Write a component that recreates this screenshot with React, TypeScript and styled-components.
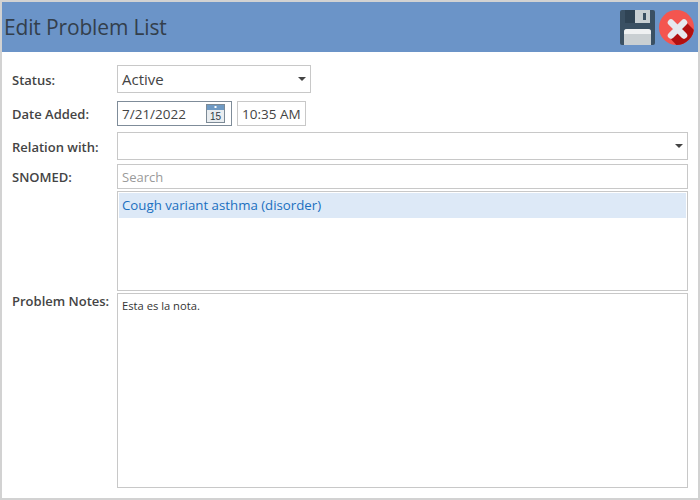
import React from "react";
import styled, { createGlobalStyle } from "styled-components";

const Global = createGlobalStyle`
  html, body {
    margin: 0;
    padding: 0;
    background: #ffffff;
  }
`;

const Dialog = styled.div`
  width: 700px;
  height: 500px;
  box-sizing: border-box;
  border: 2px solid #d2d2d2;
  background: #ffffff;
  font-family: "Open Sans", "Noto Sans", "Liberation Sans", sans-serif;
  color: #444444;
  display: flex;
  flex-direction: column;
`;

const Header = styled.div`
  height: 50px;
  flex: none;
  background: #6b94c8;
  display: flex;
  align-items: center;
  justify-content: space-between;
  padding: 0 4px 0 2px;
`;

const Title = styled.h1`
  margin: 0;
  font-size: 21px;
  font-weight: 400;
  color: #333f4c;
  letter-spacing: -0.15px;
`;

const Actions = styled.div`
  display: flex;
  align-items: center;
  gap: 4px;
`;

const Form = styled.div`
  flex: 1;
  display: grid;
  grid-template-columns: 105px 1fr;
  align-content: start;
  padding: 13px 10px 0 10px;
`;

const Label = styled.div<{ $top: number }>`
  font-size: 13px;
  font-weight: 600;
  line-height: 16px;
  color: #444444;
  padding-top: ${(p) => p.$top}px;
  white-space: nowrap;
`;

const Cell = styled.div<{ $h: number; $mb: number }>`
  height: ${(p) => p.$h}px;
  margin-bottom: ${(p) => p.$mb}px;
  display: flex;
  gap: 5px;
`;

const Field = styled.div<{ $width?: number; $size?: number }>`
  box-sizing: border-box;
  height: 100%;
  width: ${(p) => (p.$width ? `${p.$width}px` : "100%")};
  border: 1px solid #c8c8c8;
  background: #ffffff;
  display: flex;
  align-items: center;
  justify-content: space-between;
  padding: 0 4px;
  font-size: ${(p) => p.$size ?? 13.5}px;
  white-space: nowrap;
  color: #444444;
`;

const DateField = styled(Field)`
  border-color: #7f8c99;
  padding-right: 6px;
`;

const Caret = styled.span`
  width: 0;
  height: 0;
  border-left: 4px solid transparent;
  border-right: 4px solid transparent;
  border-top: 4px solid #444444;
`;

const Placeholder = styled.span`
  color: #9a9a9a;
  font-size: 13px;
`;

const ListBox = styled.div`
  box-sizing: border-box;
  width: 100%;
  height: 100%;
  border: 1px solid #c8c8c8;
  padding: 1px;
`;

const ListItem = styled.div`
  height: 25px;
  background: #dde9f7;
  color: #1a6fc0;
  font-size: 13.25px;
  line-height: 25px;
  padding-left: 3px;
`;

const Notes = styled.div`
  box-sizing: border-box;
  width: 100%;
  height: 100%;
  border: 1px solid #c8c8c8;
  font-size: 11.2px;
  color: #333333;
  padding: 4px;
`;

const SaveIcon = () => (
  <svg width="35" height="35" viewBox="0 0 35 35">
    <rect width="35" height="35" rx="2" fill="#3a5063" />
    <rect x="5" y="0" width="10" height="13" fill="#2f4354" />
    <rect x="15" y="0" width="15" height="13" fill="#c9d0d4" />
    <rect x="23" y="3" width="3" height="7" fill="#3a5063" />
    <path d="M4 35V22a3 3 0 0 1 3-3h21a3 3 0 0 1 3 3v13z" fill="#c9cfd2" />
    <path d="M4 24v-2a3 3 0 0 1 3-3h21a3 3 0 0 1 3 3v2z" fill="#eff1f2" />
  </svg>
);

const CloseIcon = () => (
  <svg width="35" height="35" viewBox="0 0 35 35">
    <defs>
      <clipPath id="close-disc">
        <circle cx="17.5" cy="17.5" r="17.5" />
      </clipPath>
    </defs>
    <circle cx="17.5" cy="17.5" r="17.5" fill="#f4554f" />
    <path d="M27 12 L48 33 L31 50 L10 27z" fill="#b21010" clipPath="url(#close-disc)" />
    <path d="M12 12.5L25 25.5M25 12.5L12 25.5" stroke="#e6e9ee" strokeWidth="6.5" strokeLinecap="round" />
  </svg>
);

const CalendarIcon = () => (
  <svg width="19" height="19" viewBox="0 0 19 19">
    <rect x="0.5" y="0.5" width="18" height="18" fill="#e9edf0" stroke="#7c8a96" />
    <rect x="1" y="1" width="17" height="5" fill="#6f9ac4" />
    <rect x="8.5" y="2" width="2" height="2" fill="#ffffff" />
    <text x="9.5" y="16" textAnchor="middle" fontSize="10" fontWeight="400" fill="#2f3b46" fontFamily="Liberation Sans, sans-serif">
      15
    </text>
  </svg>
);

export default function App() {
  return (
    <Dialog>
      <Global />
      <Header>
        <Title>Edit Problem List</Title>
        <Actions>
          <SaveIcon />
          <CloseIcon />
        </Actions>
      </Header>
      <Form>
        <Label $top={7}>Status:</Label>
        <Cell $h={28} $mb={8}>
          <Field $width={194} $size={15}>
            Active
            <Caret />
          </Field>
        </Cell>
        <Label $top={5}>Date Added:</Label>
        <Cell $h={25} $mb={6}>
          <DateField $width={115}>
            7/21/2022
            <CalendarIcon />
          </DateField>
          <Field $width={69}>10:35 AM</Field>
        </Cell>
        <Label $top={7}>Relation with:</Label>
        <Cell $h={28} $mb={4}>
          <Field>
            <span />
            <Caret />
          </Field>
        </Cell>
        <Label $top={5}>SNOMED:</Label>
        <Cell $h={25} $mb={2}>
          <Field>
            <Placeholder>Search</Placeholder>
          </Field>
        </Cell>
        <div />
        <Cell $h={100} $mb={2}>
          <ListBox>
            <ListItem>Cough variant asthma (disorder)</ListItem>
          </ListBox>
        </Cell>
        <Label $top={0}>Problem Notes:</Label>
        <Cell $h={195} $mb={0}>
          <Notes>Esta es la nota.</Notes>
        </Cell>
      </Form>
    </Dialog>
  );
}
